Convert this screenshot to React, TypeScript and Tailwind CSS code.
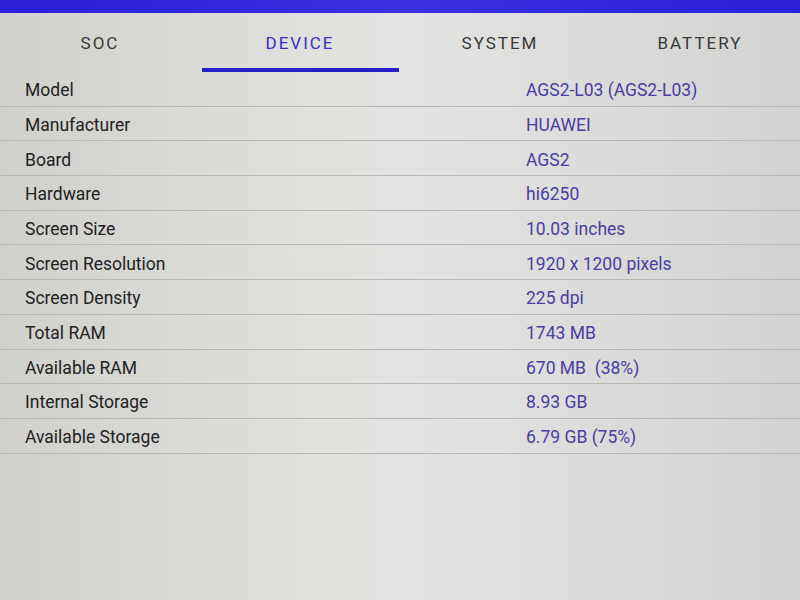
import React from "react";

const rows: [string, string][] = [
  ["Model", "AGS2-L03 (AGS2-L03)"],
  ["Manufacturer", "HUAWEI"],
  ["Board", "AGS2"],
  ["Hardware", "hi6250"],
  ["Screen Size", "10.03 inches"],
  ["Screen Resolution", "1920 x 1200 pixels"],
  ["Screen Density", "225 dpi"],
  ["Total RAM", "1743 MB"],
  ["Available RAM", "670 MB  (38%)"],
  ["Internal Storage", "8.93 GB"],
  ["Available Storage", "6.79 GB (75%)"],
];

const tabs = ["SOC", "DEVICE", "SYSTEM", "BATTERY"];

export default function App() {
  return (
    <div
      className="w-[800px] h-[600px] overflow-hidden flex flex-col bg-linear-to-r from-[#d0d0cc] via-[#e4e4e2] to-[#d2d2d0]"
      style={{ fontFamily: "Roboto, 'Noto Sans', sans-serif" }}
    >
      <div className="h-[13px] shrink-0 bg-linear-to-r from-[#2a1ed6] via-[#3a30de] to-[#2a20d8]" />
      <div className="h-[59px] shrink-0 grid grid-cols-4">
        {tabs.map((t) => (
          <div key={t} className="flex flex-col items-center">
            <div
              className={
                "flex-1 flex items-center pt-[6px] text-[17px] tracking-[2px] " +
                (t === "DEVICE" ? "text-[#3b2fc6]" : "text-[#383838]")
              }
            >
              {t}
            </div>
            <div
              className={
                "h-[4px] w-[197px] " + (t === "DEVICE" ? "bg-[#2a1ec8]" : "bg-transparent")
              }
            />
          </div>
        ))}
      </div>
      <div className="flex flex-col">
        {rows.map(([k, v]) => (
          <div
            key={k}
            className="h-[34.7px] flex items-center pt-[3px] border-b border-[#b9b9b7] text-[17.5px]"
          >
            <div className="w-[526px] pl-[25px] text-[#222222]">{k}</div>
            <div className="text-[#4a3da4] whitespace-pre">{v}</div>
          </div>
        ))}
      </div>
    </div>
  );
}
